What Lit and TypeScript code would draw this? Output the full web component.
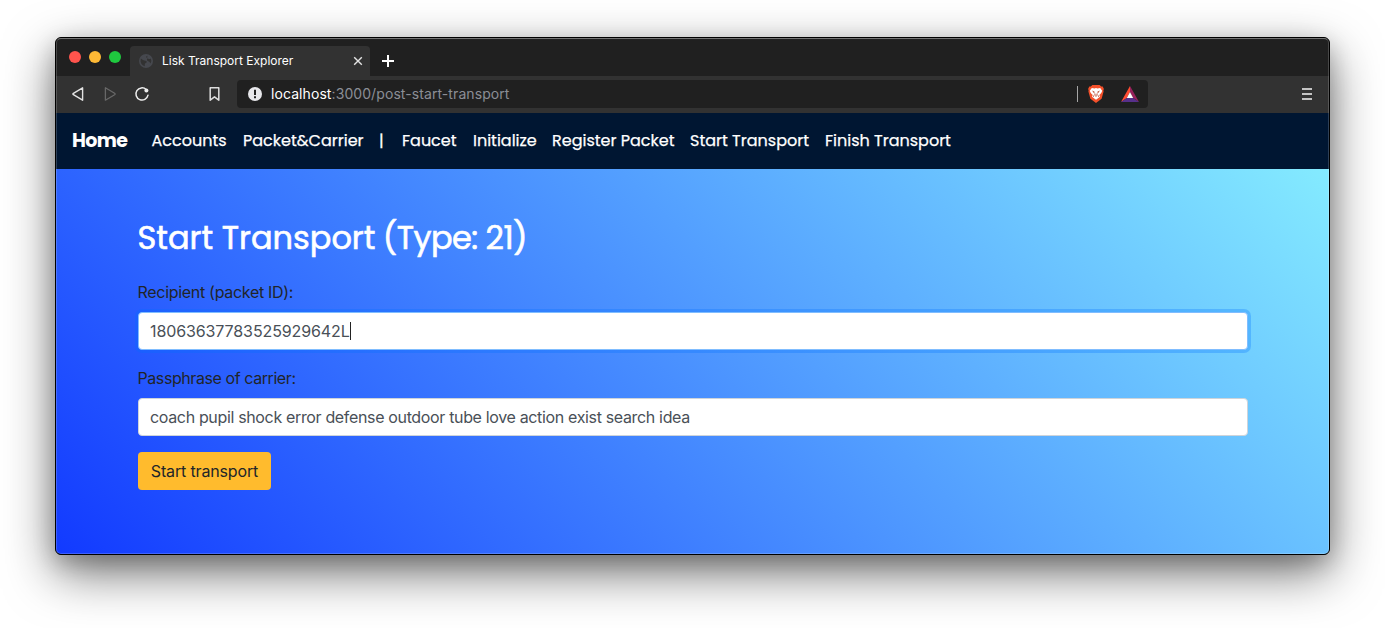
import { LitElement, html, css } from "lit";
import { customElement } from "lit/decorators.js";

const NAV = [
  { label: "Accounts", cls: "accounts" },
  { label: "Packet&Carrier", cls: "packet" },
  { label: "|", cls: "divider" },
  { label: "Faucet", cls: "faucet" },
  { label: "Initialize", cls: "initialize" },
  { label: "Register Packet", cls: "register" },
  { label: "Start Transport", cls: "start" },
  { label: "Finish Transport", cls: "finish" },
];

@customElement("browser-chrome")
class BrowserChrome extends LitElement {
  static styles = css`
    :host { display: block; font-family: Inter, "Liberation Sans", sans-serif; color: #fff; }
    svg { display: block; overflow: visible; }
    .tabs { height: 38px; background: #202020; display: flex; align-items: flex-end; }
    .lights { display: flex; gap: 8px; padding: 0 9px 13px 13px; }
    .light { width: 12px; height: 12px; border-radius: 50%; }
    .red { background: #ff544d; }
    .yellow { background: #feb935; }
    .green { background: #1fc93f; }
    .tab { width: 240px; height: 30px; box-sizing: border-box; background: #323232; border-radius: 4px 4px 0 0; display: flex; align-items: center; padding: 0 7px 0 9px; }
    .title { margin-left: 9px; flex: 1; font-size: 12px; line-height: 30px; letter-spacing: 0; white-space: nowrap; }
    .plus { margin: 0 0 9px 12px; }
    .bar { height: 37px; box-sizing: border-box; padding-bottom: 1px; background: #323232; display: flex; align-items: center; }
    .back { margin-left: 16px; }
    .forward { margin-left: 20px; }
    .reload { margin-left: 19px; }
    .mark { margin-left: 60px; }
    .address { margin-left: 17px; width: 911px; height: 28px; box-sizing: border-box; border-radius: 4px; background: #202020; display: flex; align-items: center; padding: 0 9px 0 11px; }
    .url { margin-left: 9px; padding-bottom: 1px; flex: 1; font-size: 14px; letter-spacing: 0.08px; color: #8b8e96; }
    .host { color: #fff; }
    .rule { width: 1px; height: 16px; background: #a5a5a5; }
    .lion { margin-left: 10px; }
    .bat { margin-left: 17px; }
    .menu { margin-left: auto; margin-right: 17px; }
  `;
  render() {
    return html`
      <div class="tabs">
        <div class="lights"><i class="light red"></i><i class="light yellow"></i><i class="light green"></i></div>
        <div class="tab">
          <svg width="14" height="14" viewBox="0 0 14 14"><circle cx="7" cy="7" r="7" fill="#46484e"/><path d="M1.8 4.6Q4 6.6 6.2 6.8T7.4 8.7Q5.4 9 5.8 12.2 2.2 11.2 1.6 7.6Z M8.4 1.7Q6.6 2.4 7.2 3.6 8 3.6 8.4 4.6 10 5.6 11.9 4.4 13 7.4 11.6 9.4 10.6 7.4 8.6 7 7.8 6.4 8 5.2" fill="#323232"/></svg>
          <span class="title">Lisk Transport Explorer</span>
          <svg width="10" height="10" viewBox="0 0 10 10"><path d="M1.2 1.2l7.6 7.6M8.8 1.2L1.2 8.8" stroke="#e4e4e4" stroke-width="1.4"/></svg>
        </div>
        <svg class="plus" width="12" height="12" viewBox="0 0 12 12"><path d="M6 0v12M0 6h12" stroke="#fff" stroke-width="2"/></svg>
      </div>
      <div class="bar">
        <svg class="back" width="12" height="14" viewBox="0 0 12 14"><path d="M10.6.8v12.4L1.4 7.7Q.4 7 1.4 6.3Z" fill="none" stroke="#e2e2e2" stroke-width="1.4" stroke-linejoin="round"/></svg>
        <svg class="forward" width="12" height="14" viewBox="0 0 12 14"><path d="M1.4.8v12.4l9.2-5.5Q11.6 7 10.6 6.3Z" fill="none" stroke="#686868" stroke-width="1.3" stroke-linejoin="round"/></svg>
        <svg class="reload" width="14" height="14" viewBox="0 0 14 14"><path d="M11.2 2.5A6.1 6.1 0 1 0 13 8.2" fill="none" stroke="#eee" stroke-width="1.5" stroke-linecap="round"/><circle cx="11.4" cy="3.4" r="2" fill="#eee"/></svg>
        <svg class="mark" width="11" height="14" viewBox="0 0 11 14"><path d="M1.2.8h8.6v12.4L5.5 9.8 1.2 13.2Z" fill="none" stroke="#dedede" stroke-width="1.5" stroke-linejoin="round"/></svg>
        <div class="address">
          <svg width="14" height="14" viewBox="0 0 14 14"><circle cx="7" cy="7" r="7" fill="#e7e7eb"/><path d="M7 2.7v5.2M7 9.3v2" stroke="#202020" stroke-width="2"/></svg>
          <span class="url"><span class="host">localhost</span>:3000/post-start-transport</span>
          <i class="rule"></i>
          <svg class="lion" width="16" height="18" viewBox="0 0 16 18">
            <path d="M4.4 0h7.2l1.6 1.6 1.5-.1 1.2 2.4-.5 1.4.2 1.2-2 7.3L8 18l-5.6-4.2-2-7.3.2-1.2L.1 3.9l1.2-2.4 1.5.1Z" fill="#f4502a"/>
            <path d="M3.8 3l2.8.4L8 3l1.4.4 2.8-.4 2 2.7-.8 2-1.9 2.4.5 1.7L8 14.7 4 11.8l.5-1.7-1.9-2.4-.8-2Z" fill="#fff"/>
            <path d="M4 5.6l2.6 1.1-.6 1.5ZM12 5.6L9.4 6.7l.6 1.5ZM6.8 7.2l.8 2.6-1.2.8ZM9.2 7.2l-.8 2.6 1.2.8ZM6.4 10.6h3.2L8 11.8ZM4.7 9.2l1.3 2.2-1 .7ZM11.3 9.2L10 11.4l1 .7Z" fill="#b5442a"/>
          </svg>
          <svg class="bat" width="18" height="16" viewBox="0 0 18 16"><path d="M9 0v6L5.8 12 0 16Z" fill="#ff4b32"/><path d="M9 0l9 16-5.8-4L9 6Z" fill="#97215b"/><path d="M0 16l5.8-4h6.4l5.8 4Z" fill="#57308b"/><path d="M9 6l3.2 6H5.8Z" fill="#fff"/></svg>
        </div>
        <svg class="menu" width="10" height="12" viewBox="0 0 10 12"><path d="M0 1h10M0 6h10M0 11h10" stroke="#c4c4c4" stroke-width="2"/></svg>
      </div>`;
  }
}

@customElement("app-root")
class AppRoot extends LitElement {
  static styles = css`
    :host { display: block; box-sizing: border-box; height: 628px; padding: 37px 55px 73px; background: #fff; overflow: hidden; font-family: Inter, "Liberation Sans", sans-serif; }
    .window { position: relative; box-sizing: border-box; height: 518px; border: 1px solid #000; border-radius: 6px; box-shadow: 0 18px 50px rgba(0, 0, 0, 0.55), 0 7px 22px rgba(0, 0, 0, 0.2); background: #000; }
    .content { height: 516px; border-radius: 5px; overflow: hidden; display: flex; flex-direction: column; }
    .edge { position: absolute; inset: 0; border-radius: 5px; border: 1px solid rgba(255, 255, 255, 0.18); border-top-color: rgba(255, 255, 255, 0.38); pointer-events: none; }
    nav { height: 56px; box-sizing: border-box; flex: none; background: #001632; color: #fff; display: flex; align-items: center; padding: 0 0 2px 16px; font-family: Poppins, Inter, sans-serif; font-size: 16px; font-weight: 400; white-space: nowrap; }
    .home { width: 79.5px; padding-top: 1px; font-size: 19px; font-weight: 700; letter-spacing: -0.65px; }
    .item { -webkit-text-stroke: 0.25px #fff; }
    .accounts { width: 91.5px; }
    .packet { width: 136px; }
    .divider { width: 23px; }
    .faucet { width: 71px; }
    .initialize { width: 79px; }
    .register { width: 138px; }
    .start { width: 135px; }
    main { flex: 1; background: linear-gradient(45deg, #123aff, #84ebff); padding: 44px 81px 0 82px; color: #212529; font-size: 16px; }
    h1 { margin: 0 0 19px -0.5px; height: 49px; line-height: 50px; font-family: Poppins, Inter, sans-serif; font-size: 32px; font-weight: 400; -webkit-text-stroke: 0.6px #fff; color: #fff; white-space: nowrap; }
    .type { letter-spacing: -0.55px; margin-left: -1.3px; }
    label { display: block; height: 22px; line-height: 22px; margin: 0 0 9px -0.5px; letter-spacing: -0.3px; }
    .carrier { letter-spacing: -0.42px; }
    .field { width: 1110px; height: 38px; box-sizing: border-box; border: 1px solid #ced4da; border-radius: 4px; background: #fff; color: #495057; padding: 0 11px; margin-bottom: 17px; display: flex; align-items: center; white-space: nowrap; }
    .focused { border-color: #80bdff; box-shadow: 0 0 0 3px rgba(0, 112, 255, 0.28); }
    .caret { width: 1px; height: 18px; background: #222; }
    .id { letter-spacing: -0.11px; }
    .phrase { letter-spacing: -0.345px; margin-bottom: 16px; }
    button { display: block; width: 133px; height: 38px; border: 0; border-radius: 4px; padding: 0; background: #ffbb2d; color: #212529; font: 400 16px Inter, sans-serif; letter-spacing: -0.15px; }
  `;
  render() {
    return html`
      <div class="window">
        <div class="content">
          <browser-chrome></browser-chrome>
          <nav><span class="home">Home</span>${NAV.map((n) => html`<span class="item ${n.cls}">${n.label}</span>`)}</nav>
          <main>
            <h1>Start Transport <span class="type">(Type: 21)</span></h1>
            <label>Recipient (packet ID):</label>
            <div class="field focused"><span class="id">18063637783525929642L</span><i class="caret"></i></div>
            <label class="carrier">Passphrase of carrier:</label>
            <div class="field phrase">coach pupil shock error defense outdoor tube love action exist search idea</div>
            <button>Start transport</button>
          </main>
        </div>
        <div class="edge"></div>
      </div>`;
  }
}
